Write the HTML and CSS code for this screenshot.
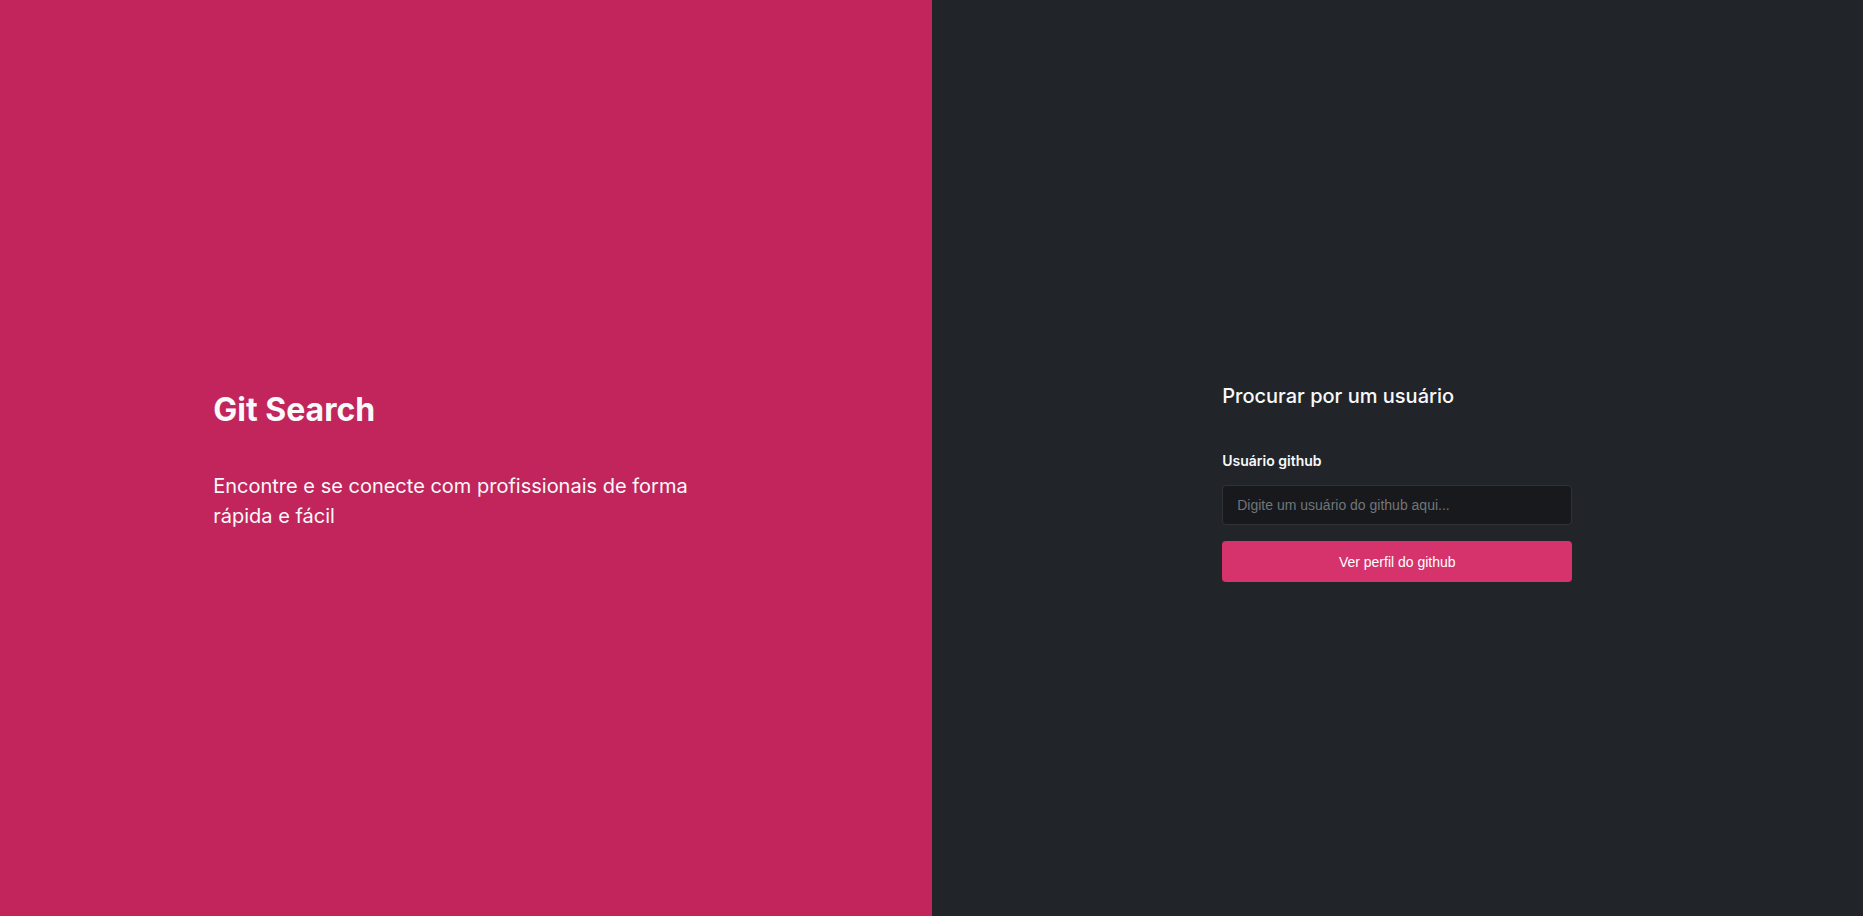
FILE: index.html
```html
<!DOCTYPE html>
<html lang="pt-BR">
<head>
    <meta charset="utf-8">
    <title>Git Search</title>
    <link rel="stylesheet" href="styles.css">
</head>
<body>
    <main class="page">
        <section class="intro">
            <div class="intro-content">
                <h1>Git Search</h1>
                <p>Encontre e se conecte com profissionais de forma rápida e fácil</p>
            </div>
        </section>

        <section class="search">
            <form class="search-form">
                <h2>Procurar por um usuário</h2>
                <label for="user">Usuário github</label>
                <input type="text" id="user" placeholder="Digite um usuário do github aqui...">
                <button type="button">Ver perfil do github</button>
            </form>
        </section>
    </main>
</body>
</html>
```

FILE: styles.css
```css
* {
    box-sizing: border-box;
}

body {
    margin: 0;
    font-family: "Inter", "Noto Sans", sans-serif;
    color: #f8f9fa;
}

.page {
    display: flex;
    height: 100vh;
}

.intro {
    flex: 1;
    background-color: #c2255c;
    display: flex;
    align-items: center;
    justify-content: center;
}

.intro-content {
    width: 505px;
    padding-top: 5px;
}

.intro h1 {
    margin: 0 0 41px 0;
    font-size: 32px;
    font-weight: 700;
    line-height: 40px;
}

.intro p {
    margin: 0;
    font-size: 20px;
    line-height: 30px;
}

.search {
    flex: 1;
    background-color: #212529;
    display: flex;
    align-items: center;
    justify-content: center;
}

.search-form {
    width: 350px;
    display: flex;
    flex-direction: column;
    margin-top: 48px;
}

.search-form h2 {
    margin: 0 0 42px 0;
    font-size: 20px;
    font-weight: 500;
    line-height: 28px;
}

.search-form label {
    font-size: 14px;
    font-weight: 600;
    margin-bottom: 16px;
}

.search-form input {
    height: 40px;
    padding: 0 14px;
    background-color: #17191c;
    border: 1px solid #2f3338;
    border-radius: 4px;
    color: #f8f9fa;
    font-family: "Liberation Sans", Arial, sans-serif;
    font-size: 14px;
    margin-bottom: 16px;
}

.search-form input::placeholder {
    color: #72757a;
}

.search-form button {
    height: 41px;
    background-color: #d6336c;
    border: none;
    border-radius: 4px;
    color: #ffffff;
    font-family: "Liberation Sans", Arial, sans-serif;
    font-size: 14px;
    cursor: pointer;
}
```
